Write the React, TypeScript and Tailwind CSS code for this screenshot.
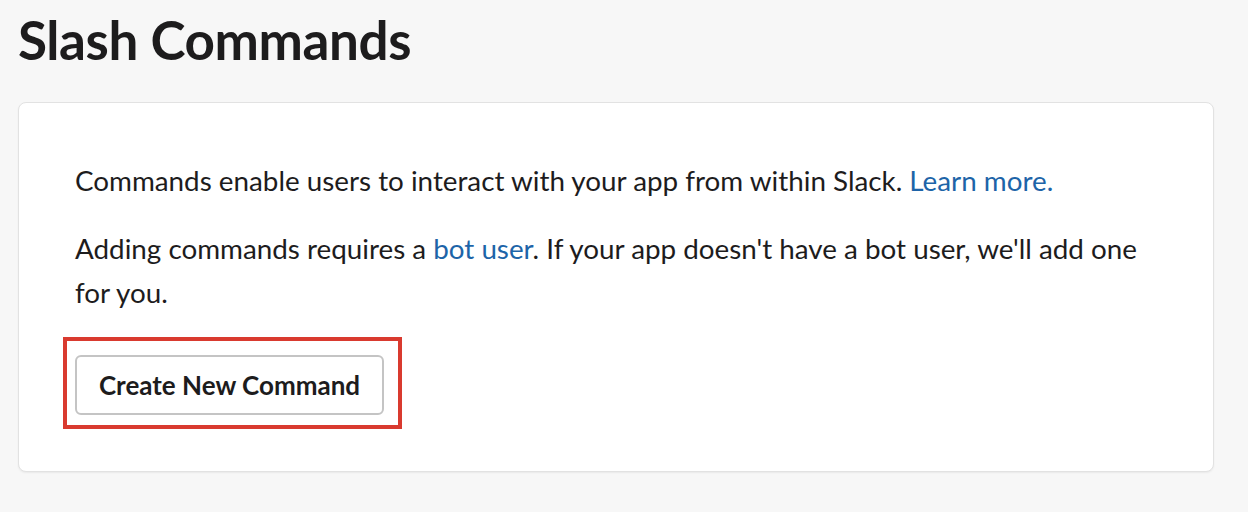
const App = () => {
  return (
    <div className="w-[1248px] h-[512px] bg-[#f7f7f7] font-['Lato',sans-serif] text-[#1d1c1d]">
      <div className="pl-[18px] pt-[9px]">
        <h1 className="text-[53px] leading-[62px] font-bold tracking-[-0.4px]">Slash Commands</h1>
        <div className="mt-[31px] w-[1196px] h-[370px] bg-white rounded-[8px] border border-[#e2e2e2] shadow-[0_1px_2px_rgba(0,0,0,0.06)] pl-[56px] pt-[56px]">
          <p className="text-[27.8px] leading-[44px]">
            Commands enable users to interact with your app from within Slack.{" "}
            <a href="#" className="text-[#1d64a8]">Learn more.</a>
          </p>
          <p className="mt-[24px] text-[27.8px] leading-[44px] w-[1085px]">
            Adding commands requires a <a href="#" className="text-[#1d64a8]">bot user</a>. If your app doesn't have a bot user, we'll add one for you.
          </p>
          <div className="mt-[22px] ml-[-12px] w-[339px] h-[92px] border-[4px] border-[#d93a2f] pt-[14px] pl-[8px]">
            <button className="w-[309px] h-[60px] rounded-[6px] border-[2px] border-[#c4c4c4] bg-white text-[26px] font-bold">
              Create New Command
            </button>
          </div>
        </div>
      </div>
    </div>
  );
};

export default App;
